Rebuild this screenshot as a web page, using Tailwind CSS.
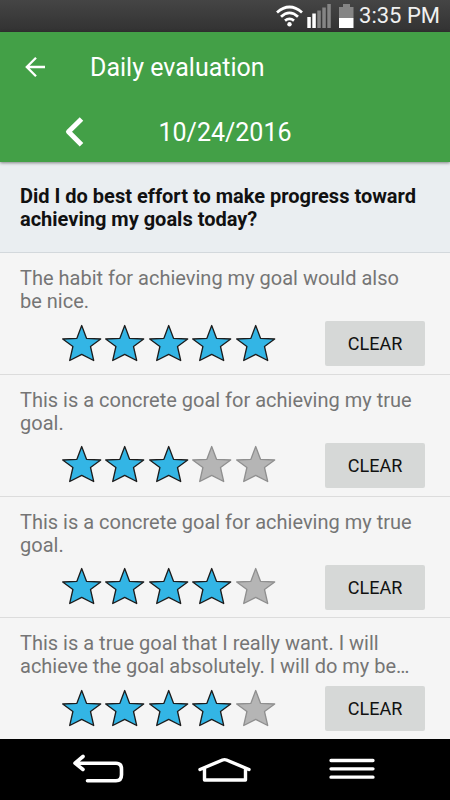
<!DOCTYPE html>
<html lang="en">
<head>
<meta charset="utf-8">
<meta name="viewport" content="width=device-width, initial-scale=1">
<title>Daily evaluation</title>
<script src="https://cdn.jsdelivr.net/npm/@tailwindcss/browser@4"></script>
</head>
<body class="flex min-h-screen flex-col bg-[#f5f5f5] font-[Roboto,sans-serif] text-[#757575]">
<div class="flex h-8 shrink-0 items-center justify-end bg-linear-to-b from-[#454545] to-[#323232] pr-2.5 text-[#f0f0f0]">
  <svg class="h-8 w-14 shrink-0" viewBox="0 0 56 32" fill="none" aria-hidden="true">
    <g stroke="#fff" stroke-width="2.800">
      <path d="M2 12.500Q14.500 1.500 27 12.500"/>
      <path d="M6 16.700Q14.500 9 23 16.700"/>
      <path d="M10 20.700Q14.500 17 19 20.700"/>
    </g>
    <circle cx="14.500" cy="24.300" r="2.200" fill="#fff"/>
    <path d="M32.300 17h3.500v11h-3.500zM37.300 13.500h3.500V28h-3.500z" fill="#fff"/>
    <path d="M42.300 10.500h3.500V28h-3.500zM47.300 7.500h3.500V28h-3.500zM52.300 4h3.500v24h-3.500z" fill="#858585"/>
  </svg>
  <svg class="ml-2 h-8 w-4 shrink-0" viewBox="0 0 16 32" aria-hidden="true">
    <path d="M4 4h7v3h3.500v11H0V7h4z" fill="#858585"/><path d="M0 18h14.500v10H0z" fill="#fff"/>
  </svg>
  <time class="ml-1 text-[22px] leading-8">3:35 PM</time>
</div>
<header class="z-10 shrink-0 bg-[#43a047] text-white shadow-[0_1px_3px_rgba(0,0,0,0.45)]">
  <div class="flex h-[71px] items-center pl-5">
    <button type="button" aria-label="Back" class="flex size-8 items-center justify-center">
      <svg class="size-8" viewBox="0 0 32 32" fill="none" stroke="#fff" stroke-width="2.300"><path d="M25 15H7M16 5.800L6.800 15l9.200 9.200"/></svg>
    </button>
    <h1 class="ml-[38px] text-[25px]">Daily evaluation</h1>
  </div>
  <div class="grid h-[59px] grid-cols-3 items-center">
    <button type="button" aria-label="Previous day" class="size-8 justify-self-center">
      <svg class="size-8" viewBox="0 0 32 32" fill="none" stroke="#fff" stroke-width="5" stroke-linejoin="round"><path d="M22.500 2L9.500 14.800l13 13"/></svg>
    </button>
    <time class="justify-self-center text-[25px]" datetime="2016-10-24">10/24/2016</time>
  </div>
</header>
<main class="flex grow flex-col">
  <h2 class="shrink-0 border-b border-[#d3d8dc] bg-[#eaeef1] px-5 pt-[23px] pb-[21px] text-[20px] leading-[23px] font-bold text-[#111]">Did I do best effort to make progress toward achieving my goals today?</h2>
  <ul id="goals" class="flex grow flex-col"></ul>
</main>
<nav class="grid h-[61px] shrink-0 grid-cols-[194px_1fr_194px] bg-black">
  <button type="button" aria-label="Back" class="flex items-center justify-center">
    <svg class="h-10 w-14" viewBox="0 0 56 40" fill="none" stroke="#fff" stroke-width="3.600" stroke-linecap="round" stroke-linejoin="round"><path d="M14 6.500L6 13.200l8 6.300M7 13.200h40q5.500 0 5.500 6v5.500q0 6-5.500 6H18.500"/></svg>
  </button>
  <button type="button" aria-label="Home" class="flex items-center justify-center">
    <svg class="h-10 w-14" viewBox="0 0 56 40" fill="none" stroke="#fff" stroke-width="3.400" stroke-linecap="round" stroke-linejoin="round"><path d="M3 19.500L25.500 10q2-.8 4 0l22.500 9.500M7.500 19v11h41V19"/></svg>
  </button>
  <button type="button" aria-label="Menu" class="flex items-center justify-center">
    <svg class="h-10 w-14" viewBox="0 0 56 40" fill="none" stroke="#fff" stroke-width="3.300" stroke-linecap="round"><path d="M6 10.500h42M6 18.800h42M6 27.200h42"/></svg>
  </button>
</nav>
<script>
const goals = [
  { text: "The habit for achieving my goal would also be nice.", stars: 5 },
  { text: "This is a concrete goal for achieving my true goal.", stars: 3 },
  { text: "This is a concrete goal for achieving my true goal.", stars: 4 },
  { text: "This is a true goal that I really want. I will achieve the goal absolutely. I will do my be…", stars: 4 }
];
const list = document.getElementById("goals");
const starPath = "M21.5 1.500L26.300 14.300L40.500 15L30.300 22.500L33.500 36.500L21.500 30.300L9.500 36.500L12.700 22.500L2.500 15L16.700 14.300Z";

function render() {
  list.innerHTML = goals.map((goal, g) => `
    <li class="grow border-b border-[#dcdcdc] pt-3.5 last:border-b-0">
      <p id="goal-${g}" class="mr-7 ml-5 text-[20px] leading-[23px]">${goal.text}</p>
      <div class="mt-2 mb-1.5 flex items-center justify-between pr-[25px] pl-[60px]">
        <div role="radiogroup" aria-labelledby="goal-${g}" class="flex w-[217px]">
          ${[1, 2, 3, 4, 5].map(n => `
          <label class="relative flex-1">
            <input type="radio" name="rating-${g}" value="${n}" aria-label="${n} of 5 stars" class="absolute inset-0 m-0 size-full opacity-0" ${goal.stars === n ? "checked" : ""}>
            <svg class="h-10 w-full" viewBox="0 0 43 40" aria-hidden="true"><path d="${starPath}" stroke-width="1.300" stroke-linejoin="round" class="${n <= goal.stars ? "fill-[#33b5e5] stroke-[#1c1c1c]" : "fill-[#b5b5b5] stroke-[#8f8f8f]"}"/></svg>
          </label>`).join("")}
        </div>
        <button type="button" data-clear="${g}" class="h-[45px] w-[100px] rounded-xs bg-[#d6d8d7] text-[18px] text-[#111]">CLEAR</button>
      </div>
    </li>`).join("");
}
list.addEventListener("change", e => {
  goals[Number(e.target.name.split("-")[1])].stars = Number(e.target.value);
  render();
});
list.addEventListener("click", e => {
  if (e.target.dataset.clear !== undefined) {
    goals[Number(e.target.dataset.clear)].stars = 0;
    render();
  }
});
render();
</script>
</body>
</html>
